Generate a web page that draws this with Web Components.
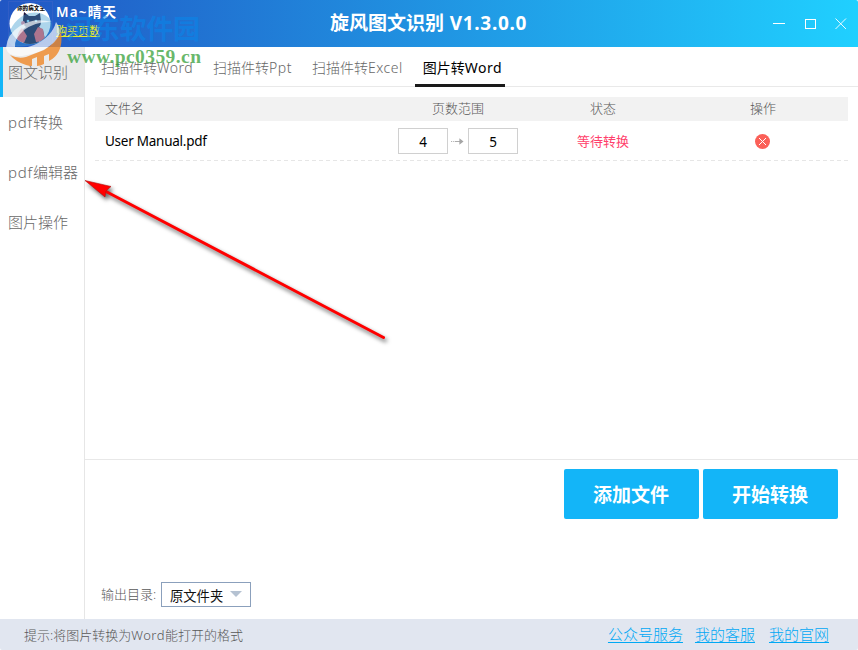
<!DOCTYPE html>
<html lang="zh-CN">
<head>
<meta charset="utf-8">
<title>旋风图文识别</title>
<style>
  body {
    margin: 0;
    background: #fff;
    font-family: "Noto Sans", "Noto Sans CJK SC", sans-serif;
  }
</style>
</head>
<body>
<ocr-app></ocr-app>
<script>
(function(customElements) {
  'use strict';

  function define(name, html) {
    customElements.define(name, class extends HTMLElement {
      constructor() {
        super();
        this.attachShadow({mode: 'open'}).innerHTML = html;
      }
    });
  }

  define('user-avatar', `
    <style>
      :host { display: block; width: 45px; height: 46px; }
      svg { display: block; }
    </style>
    <svg width="45" height="46" viewBox="8 0 45 46">
      <rect x="8.5" y="1.5" width="44" height="44" fill="none" stroke="#3f63c8" stroke-opacity=".5"/>
      <clipPath id="face"><circle cx="30" cy="23.5" r="20.5"/></clipPath>
      <circle cx="30" cy="23.5" r="20.5" fill="#fff"/>
      <g clip-path="url(#face)">
        <text x="17" y="10" font-size="5.5" font-weight="900" fill="#111" textLength="28">你的病文主</text>
        <path d="M24 12l5 4h6l5-3 1 9q0 3-2 5l4 3 2 10-6 1-1 4H24l-1-3-5-2 4-10 4-3q-3-2-3-7z" fill="#22143a"/>
        <path d="M22 28q-5 4-5 13l7 2 3-7zm16-1l-4 7 2 8 9-1-2-12z" fill="#ff5a60"/>
        <circle cx="23" cy="23" r="2" fill="#ff8e98"/>
        <circle cx="28" cy="21" r="1.3" fill="#9ad8f4"/><circle cx="36" cy="21" r="1.3" fill="#9ad8f4"/>
      </g>
    </svg>`);

  define('window-buttons', `
    <style>
      :host { display: block; }
      svg { display: block; }
    </style>
    <svg width="76" height="14" viewBox="0 0 76 14" fill="none" stroke="#fff" shape-rendering="crispEdges">
      <path d="M0 6.5h12M32.5 2.5h10v9h-10z"/>
      <path d="M62.5 1.5l10.5 10.5M73 1.5L62.5 12" stroke-width=".9" shape-rendering="auto"/>
    </svg>`);

  define('title-bar', `
    <style>
      :host {
        display: grid;
        grid-template-columns: 330px 1fr auto;
        height: 47px;
        background: linear-gradient(90deg, #2156c4, #20d0ff);
        border-radius: 2px 2px 0 0;
        color: #fff;
      }
      .user { display: flex; padding-left: 8px; gap: 3px; }
      .name { font-size: 13.5px; font-weight: 600; line-height: 18px; padding-top: 3px; letter-spacing: 1.2px; }
      .buy { display: block; font-size: 11px; line-height: 20px; color: #e6ef2b; text-decoration: underline; }
      h1 { margin: 0; font-size: 19px; line-height: 47px; font-weight: 700; white-space: nowrap; }
      h1 span { letter-spacing: .7px; }
      window-buttons { padding: 17px 9px 0 0; }
    </style>
    <div class="user">
      <user-avatar></user-avatar>
      <div><div class="name">Ma~晴天</div><a class="buy">购买页数</a></div>
    </div>
    <h1>旋风图文识别<span> V1.3.0.0</span></h1>
    <window-buttons></window-buttons>`);

  define('side-item', `
    <style>
      :host {
        display: block;
        box-sizing: border-box;
        height: 50px;
        padding-left: 8px;
        font-size: 15px;
        line-height: 50px;
        color: #686868;
        white-space: nowrap;
        font-weight: 300;
      }
      :host([active]) { background: #eaeaea; border-left: 3px solid #13b5f8; padding-left: 5px; }
      ::slotted(span) { letter-spacing: .8px; }
    </style>
    <slot></slot>`);

  define('tab-item', `
    <style>
      :host {
        display: block;
        box-sizing: border-box;
        height: 40px;
        font-size: 14px;
        line-height: 42px;
        color: #686868;
        white-space: nowrap;
        font-weight: 300;
      }
      :host([active]) { color: #000; border-bottom: 3px solid #1a1a1a; font-weight: 400; text-align: center; }
      ::slotted(span) { letter-spacing: .5px; }
    </style>
    <slot></slot>`);

  define('tab-bar', `
    <style>
      :host { display: flex; box-sizing: border-box; height: 40px; margin-left: 15px; background: linear-gradient(#e9e9e9, #e9e9e9) 0 100% / 100% 1px no-repeat; }
      .t1 { width: 113px; padding-left: 1px; }
      .t2 { width: 99px; }
      .t3 { width: 103px; }
      .t4 { width: 90px; padding-left: 5px; }
      tab-item { flex: none; }
    </style>
    <tab-item class="t1">扫描件转<span>Word</span></tab-item>
    <tab-item class="t2">扫描件转<span>Ppt</span></tab-item>
    <tab-item class="t3">扫描件转<span>Excel</span></tab-item>
    <tab-item class="t4" active>图片转<span>Word</span></tab-item>`);

  define('page-range', `
    <style>
      :host { display: flex; align-items: center; width: 120px; }
      span {
        box-sizing: border-box;
        flex: none;
        width: 50px;
        height: 26px;
        border: 1px solid #d0d0d0;
        font-size: 13.5px;
        line-height: 26px;
        text-align: center;
      }
      span:first-child { width: 49px; text-indent: -1px; }
      svg { margin: 0 4px 0 3px; }
    </style>
    <span>4</span>
    <svg width="14" height="9" viewBox="0 0 14 9"><path d="M0 4.5h1m1 0h1m1 0h7" stroke="#a5a5a5"/><path d="M9 1v7l4.500-3.500z" fill="#a5a5a5"/></svg>
    <span>5</span>`);

  define('file-table', `
    <style>
      :host { display: block; margin: 10px 10px 0; font-size: 13px; }
      .row { display: grid; grid-template-columns: 293px 140px 150px 170px; align-items: center; }
      .head { height: 24px; background: #f2f2f2; color: #585858; font-weight: 300; line-height: 22px; align-items: start; }
      .head > :not(:first-child), .file > :not(:first-child) { justify-self: center; }
      .file {
        height: 40px;
        color: #000;
        background: repeating-linear-gradient(90deg, #e6e6e6 0 4px, transparent 4px 7px) 0 100% / 100% 1px no-repeat;
      }
      .name { padding-left: 10px; }
      .file .name { font-size: 13.5px; letter-spacing: -.25px; }
      .state { color: #ff3f6c; padding-bottom: 2px; }
      .file svg { display: block; margin-right: 1px; }
    </style>
    <div class="row head"><span class="name">文件名</span><span>页数范围</span><span>状态</span><span>操作</span></div>
    <div class="row file">
      <span class="name">User Manual.pdf</span>
      <page-range></page-range>
      <span class="state">等待转换</span>
      <svg width="15" height="15" viewBox="0 0 15 15"><circle cx="7.5" cy="7.5" r="7.5" fill="#fb6058"/><path d="M4 4l7 7M11 4l-7 7" stroke="#fff"/></svg>
    </div>`);

  define('action-button', `
    <style>
      :host {
        display: block;
        width: 135px;
        height: 50px;
        border-radius: 2px;
        background: #13b5f8;
        color: #fff;
        font-size: 19px;
        font-weight: 700;
        line-height: 52px;
        text-align: center;
        text-indent: -1px;
      }
    </style>
    <slot></slot>`);

  define('folder-select', `
    <style>
      :host {
        display: flex;
        align-items: center;
        box-sizing: border-box;
        width: 90px;
        height: 25px;
        padding: 1px 8px 0;
        border: 1px solid #8ba0bc;
        font-size: 13.3px;
        color: #111;
        justify-content: space-between;
      }
      svg { margin-bottom: 2px; }
    </style>
    <slot></slot>
    <svg width="12" height="6" viewBox="0 0 12 6"><path d="M0 0h12L6 6z" fill="#b5c2d2"/></svg>`);

  define('bottom-panel', `
    <style>
      :host { display: flex; flex-direction: column; justify-content: space-between; box-sizing: border-box; height: 160px; border-top: 1px solid #e8e8e8; padding: 9px 20px 12px 16px; }
      .buttons { display: flex; justify-content: flex-end; gap: 4px; }
      .output { display: flex; align-items: center; gap: 5px; font-size: 13px; color: #585858; }
      .output span { width: 55px; white-space: nowrap; font-weight: 300; padding-bottom: 2px; }
    </style>
    <div class="buttons"><action-button>添加文件</action-button><action-button>开始转换</action-button></div>
    <div class="output"><span>输出目录:</span><folder-select>原文件夹</folder-select></div>`);

  define('status-bar', `
    <style>
      :host {
        display: flex;
        justify-content: space-between;
        box-sizing: border-box;
        height: 31px;
        padding: 0 29px 0 24px;
        background: #e1e6f0;
        border-radius: 0 0 2px 2px;
        font-size: 13px;
        line-height: 32px;
        color: #585858;
        font-weight: 300;
      }
      .latin { letter-spacing: .5px; }
      nav { display: flex; gap: 14px; font-size: 15px; line-height: 30px; }
      nav a:first-child { margin-right: -2px; }
      a { color: #00a8f4; text-decoration: underline; text-underline-offset: 2px; text-decoration-thickness: 1px; }
    </style>
    <span>提示:将图片转换为<span class="latin">Word</span>能打开的格式</span>
    <nav><a>公众号服务</a><a>我的客服</a><a>我的官网</a></nav>`);

  // site stamp that lies over the top left corner
  define('site-stamp', `
    <style>
      :host { position: absolute; left: 0; top: 0; pointer-events: none; }
      svg { display: block; }
    </style>
    <svg width="210" height="72" viewBox="0 0 210 72">
      <path d="M8 41Q9 24 24 15 38 9 49 18 54 23 51 33 44 43 31 45 19 48 12 46z" fill="#3c9bd0" opacity=".42"/>
      <path d="M6 48Q7 34 20 26 34 17 52 22 36 21 24 30 14 39 15 47 22 50 34 45 52 37 56 22 64 33 54 43 40 54 22 56 8 57 6 48z" fill="#fff" opacity=".68"/>
      <g fill="#f08a2c" opacity=".82">
        <path d="M10 55Q18 59 26 57v8Q16 62 10 55z"/>
        <path d="M26 57l18-7v14q-4 2-7 2V57l-5 2v7q-3 0-6-1z"/>
        <path d="M44 50Q56 43 61 32 64 53 49 61V54l-5 2z"/>
      </g>
      <text x="66" y="39" font-size="27" font-weight="700" fill="#0788ec" fill-opacity=".55" textLength="134">河东软件园</text>
      <text x="67" y="63" font-family="Liberation Serif, serif" font-size="19.5" font-weight="700" fill="#37a13a" fill-opacity=".76" textLength="134">www.pc0359.cn</text>
    </svg>`);

  define('pointer-arrow', `
    <style>
      :host { position: absolute; left: 80px; top: 171px; pointer-events: none; }
      svg { display: block; filter: drop-shadow(2px 3px 2px rgba(0, 0, 0, .6)); }
    </style>
    <svg width="320" height="180" viewBox="80 172 320 180">
      <path d="M106 192.5L383.5 338.5" stroke="#f00" stroke-width="3" stroke-linecap="round"/>
      <path d="M85 181.5l26 6-5 4.500-1 6z" fill="#f00" stroke="#b01010" stroke-width=".6"/>
    </svg>`);

  define('ocr-app', `
    <style>
      :host { display: grid; grid-template-rows: 47px 572px 31px; position: relative; width: 858px; height: 650px; overflow: hidden; }
      .body { display: grid; grid-template-columns: 85px 1fr; }
      aside { border-right: 1px solid #e6e6e6; }
      main { display: flex; flex-direction: column; min-width: 0; }
      bottom-panel { margin-top: auto; }
    </style>
    <title-bar></title-bar>
    <div class="body">
      <aside>
        <side-item active>图文识别</side-item>
        <side-item><span>pdf</span>转换</side-item>
        <side-item><span>pdf</span>编辑器</side-item>
        <side-item>图片操作</side-item>
      </aside>
      <main>
        <tab-bar></tab-bar>
        <file-table></file-table>
        <bottom-panel></bottom-panel>
      </main>
    </div>
    <status-bar></status-bar>
    <site-stamp></site-stamp>
    <pointer-arrow></pointer-arrow>`);
})(window.customElements);
</script>
</body>
</html>
